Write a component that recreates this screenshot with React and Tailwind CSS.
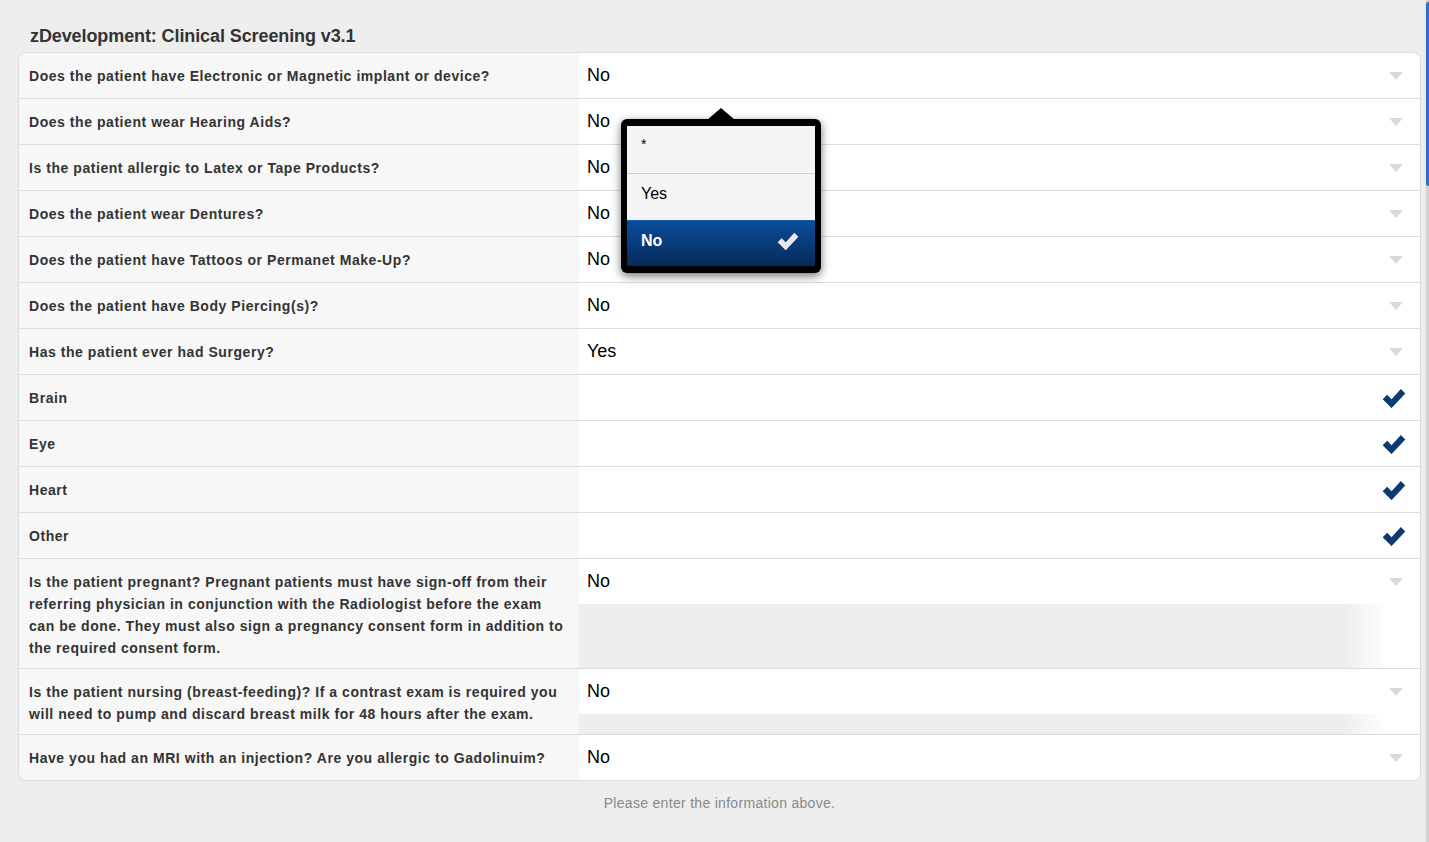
import React from 'react'

const font = { fontFamily: '"Liberation Sans", Arial, sans-serif' }

const selectRows = [
  ['Does the patient have Electronic or Magnetic implant or device?', 'No'],
  ['Does the patient wear Hearing Aids?', 'No'],
  ['Is the patient allergic to Latex or Tape Products?', 'No'],
  ['Does the patient wear Dentures?', 'No'],
  ['Does the patient have Tattoos or Permanet Make-Up?', 'No'],
  ['Does the patient have Body Piercing(s)?', 'No'],
  ['Has the patient ever had Surgery?', 'Yes'],
]

const checkRows = ['Brain', 'Eye', 'Heart', 'Other']

function Arrow() {
  return (
    <svg width="14" height="8" viewBox="0 0 14 8" className="shrink-0">
      <polygon points="0,0 14,0 7,8" fill="#d9d9d9" />
    </svg>
  )
}

function Check({ color = '#0c3a70', w = 24 }) {
  return (
    <svg width={w} height={w * 0.9} viewBox="0 0 24 22">
      <path d="M0.5 12.5 L5 8 L9.5 12.5 L19 2 L23.5 6.5 L9.5 21.5 Z" fill={color} />
    </svg>
  )
}

function Label({ children }) {
  return (
    <div className="w-[560px] shrink-0 bg-[#f7f7f7] pl-[10px] pr-[12px] pt-[12px] pb-[10px] text-[14px] leading-[22px] font-bold tracking-[0.55px] text-[#333]">
      {children}
    </div>
  )
}

function SelectValue({ value, extra }) {
  return (
    <div className="flex-1 flex flex-col bg-white">
      <div className="h-[45px] shrink-0 flex items-center justify-between pl-2 pr-[17px] text-[18px] text-black">
        <span>{value}</span>
        <Arrow />
      </div>
      {extra && <div className="flex-1 bg-[linear-gradient(to_right,#eeeeee_91%,#ffffff_96%)]" />}
    </div>
  )
}

function Popover() {
  return (
    <div className="absolute left-[602px] top-[66px] w-[200px] bg-black rounded-[6px] px-[6px] py-[7px] shadow-[0_3px_10px_rgba(0,0,0,0.55)] z-10">
      <svg width="28" height="12" viewBox="0 0 28 12" className="absolute left-[86px] -top-[11px]">
        <polygon points="0,12 14,0 28,12" fill="#000" />
      </svg>
      <div className="bg-[#f5f5f5]">
        <div className="h-[47px] pl-[14px] pt-[8px] text-[14px] text-black">*</div>
        <div className="h-[47px] border-t border-[#cfcfcf] pl-[14px] pb-[6px] flex items-center text-[16px] text-black">Yes</div>
        <div className="h-[46px] border-t border-[#1a5cb0] pl-[14px] pr-[16px] pb-[6px] flex items-center justify-between text-[16px] font-bold text-white bg-[linear-gradient(to_bottom,#0b4d9a,#072a5c)]">
          <span>No</span>
          <Check color="#e8e8e8" w={22} />
        </div>
      </div>
    </div>
  )
}

export default function App() {
  return (
    <div className="h-[842px] bg-[#eeeeee] flex overflow-hidden" style={font}>
      <div className="flex-1 pl-[18px] pr-[4px]">
        <div className="pt-[23px] pl-[12px] h-[52px] text-[18px] tracking-[-0.1px] font-bold text-[#333]">
          zDevelopment: Clinical Screening v3.1
        </div>
        <div className="relative border border-[#dcdcdc] rounded-[8px] bg-white">
          <Popover />
          <div className="rounded-[8px] overflow-hidden">
            {selectRows.map(([q, v], i) => (
              <div key={i} className={'flex ' + (i > 0 ? 'h-[46px] border-t border-[#dcdcdc]' : 'h-[45px]')}>
                <Label>{q}</Label>
                <SelectValue value={v} />
              </div>
            ))}
            {checkRows.map((q) => (
              <div key={q} className="flex h-[46px] border-t border-[#dcdcdc]">
                <Label>{q}</Label>
                <div className="flex-1 bg-white flex items-center justify-end pr-[14px]">
                  <Check />
                </div>
              </div>
            ))}
            <div className="flex h-[110px] border-t border-[#dcdcdc]">
              <Label>
                Is the patient pregnant? Pregnant patients must have sign-off from their referring physician in conjunction with the Radiologist before the exam can be done. They must also sign a pregnancy consent form in addition to the required consent form.
              </Label>
              <SelectValue value="No" extra />
            </div>
            <div className="flex h-[66px] border-t border-[#dcdcdc]">
              <Label>
                Is the patient nursing (breast-feeding)? If a contrast exam is required you will need to pump and discard breast milk for 48 hours after the exam.
              </Label>
              <SelectValue value="No" extra />
            </div>
            <div className="flex h-[46px] border-t border-[#dcdcdc]">
              <Label>Have you had an MRI with an injection? Are you allergic to Gadolinuim?</Label>
              <SelectValue value="No" />
            </div>
          </div>
        </div>
        <div className="text-center text-[14px] tracking-[0.3px] text-[#888] pt-[12px]">
          Please enter the information above.
        </div>
      </div>
      <div className="w-[4px] shrink-0 bg-[#d2d2d2] border-l border-[#e6e6e6] pt-[2px]">
        <div className="h-[184px] bg-[#a9c6ee] border-2 border-[#2f6fd0] rounded-[3px]" />
      </div>
    </div>
  )
}
